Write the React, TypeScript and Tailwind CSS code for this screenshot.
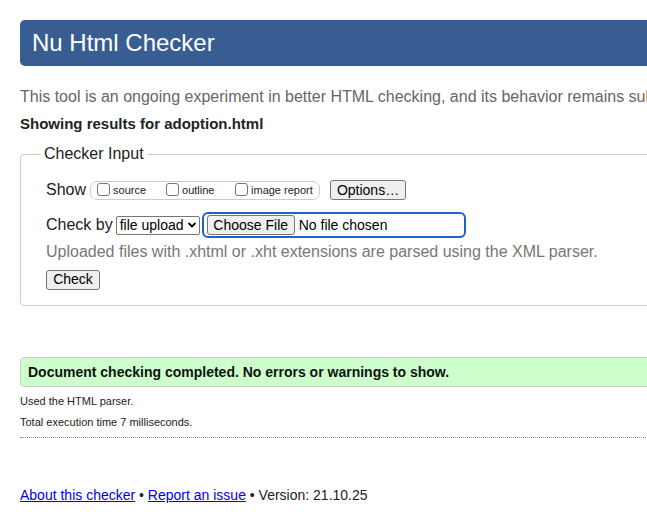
import React from 'react';

const Box: React.FC = () => (
  <span className="inline-block w-[13px] h-[13px] border border-[#767676] rounded-[3px] bg-white mr-[3px] align-[-2px]"></span>
);

const Btn: React.FC<{ children: React.ReactNode; className?: string }> = ({ children, className }) => (
  <span
    className={
      'inline-flex items-center justify-center h-[20px] border border-[#767676] rounded-[3px] bg-[#efefef] text-[14px] text-black ' +
      (className || '')
    }
  >
    {children}
  </span>
);

const App: React.FC = () => {
  return (
    <div className="w-[647px] h-[531px] overflow-hidden bg-white font-['Liberation_Sans',Arial,sans-serif]">
      <div className="w-[700px] pl-[20px] pt-[20px]">
        {/* Header */}
        <div className="h-[46px] bg-[#385d93] rounded-l-[5px] flex items-center pl-[12px]">
          <h1 className="text-white text-[24px] leading-none">Nu Html Checker</h1>
        </div>

        <p className="mt-[22px] text-[16px] leading-[18px] text-[#666] whitespace-nowrap">
          This tool is an ongoing experiment in better HTML checking, and its behavior remains subject to change
        </p>

        <p className="mt-[9px] text-[15px] leading-[18px] font-bold text-[#222]">Showing results for adoption.html</p>

        {/* Checker input fieldset */}
        <fieldset className="mt-[12px] border border-[#ccc] rounded-[4px] pl-[25px] pr-[10px] pb-[14px] pt-[17px] w-[660px]">
          <legend className="px-[3px] -ml-[5px] text-[16px] leading-[18px] text-[#222]">Checker Input</legend>

          <div className="flex items-center h-[20px] text-[16px] text-[#222]">
            <span>Show</span>
            <span className="ml-[4px] h-[19px] w-[230px] border border-[#ccc] rounded-[7px] flex items-center pl-[6px] text-[11px] text-[#222]">
              <span className="w-[69px] whitespace-nowrap"><Box />source</span>
              <span className="w-[69px] whitespace-nowrap"><Box />outline</span>
              <span className="whitespace-nowrap"><Box />image report</span>
            </span>
            <Btn className="ml-[10px] w-[76px]">Options…</Btn>
          </div>

          <div className="flex items-center mt-[12px] h-[26px] text-[16px] text-[#222]">
            <span>Check by</span>
            <span className="ml-[3px] h-[19px] w-[84px] border border-[#767676] rounded-[2px] bg-white flex items-center justify-between pl-[3px] pr-[2px] text-[14px] text-black">
              file upload
              <svg width="10" height="8" viewBox="0 0 10 8">
                <path d="M1.5 2 L5 5.5 L8.5 2" stroke="#000" strokeWidth="1.8" fill="none" />
              </svg>
            </span>
            <span className="ml-[2px] h-[26px] w-[264px] border-2 border-[#1a62cf] rounded-[6px] flex items-center pl-[3px] text-[14px] text-black">
              <Btn className="w-[88px]">Choose File</Btn>
              <span className="ml-[4px]">No file chosen</span>
            </span>
          </div>

          <p className="mt-[4px] text-[16px] leading-[20px] text-[#777] whitespace-nowrap">
            Uploaded files with .xhtml or .xht extensions are parsed using the XML parser.
          </p>

          <div className="mt-[5px]">
            <Btn className="w-[54px]">Check</Btn>
          </div>
        </fieldset>

        {/* Result */}
        <div className="mt-[51px] h-[30px] bg-[#ccffcc] border border-[#ccc] rounded-l-[4px] flex items-center pl-[7px]">
          <span className="text-[14px] font-bold text-[#111]">Document checking completed. No errors or warnings to show.</span>
        </div>

        <p className="mt-[7px] text-[11px] leading-[14px] text-[#222]">Used the HTML parser.</p>
        <p className="mt-[7px] text-[11px] leading-[14px] text-[#222]">Total execution time 7 milliseconds.</p>
        <div className="mt-[8px] border-t border-dotted border-[#888]"></div>

        <p className="mt-[49px] text-[14px] leading-[16px] text-[#222]">
          <a className="text-[#0000ee] underline">About this checker</a> • <a className="text-[#0000ee] underline">Report an issue</a> • Version: 21.10.25
        </p>
      </div>
    </div>
  );
};

export default App;
